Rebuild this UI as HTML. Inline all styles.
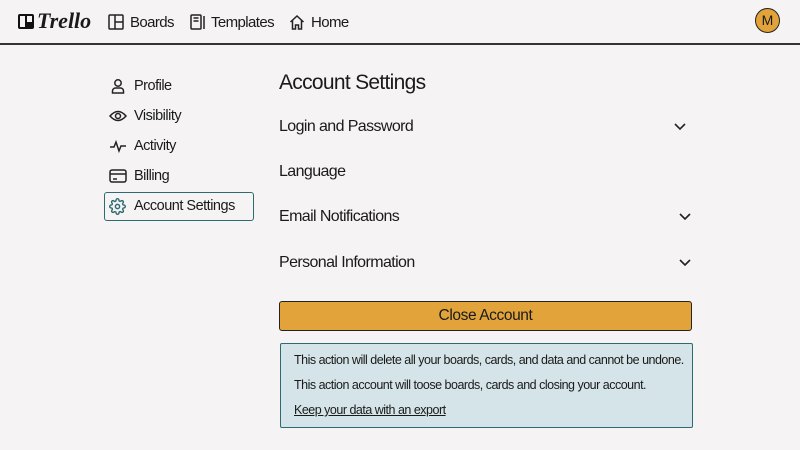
<!DOCTYPE html>
<html><head><meta charset="utf-8"><style>
body{margin:0;width:800px;height:450px;background:#f5f3f3;font-family:"Liberation Sans",sans-serif;color:#1a1a1a;position:relative;overflow:hidden}
.a{position:absolute;white-space:nowrap}
.hdr{font-size:15px;letter-spacing:-0.6px}
.side{font-size:14.5px;left:134px;letter-spacing:-0.5px}
.row{font-size:16px;left:279px;letter-spacing:-0.6px}
.inf{left:294px;font-size:12.5px;letter-spacing:-0.5px}
svg{position:absolute}
</style></head><body>
<div class="a" style="left:0;top:43px;width:800px;height:2px;background:#333"></div>
<svg style="left:17px;top:13px" width="18" height="17" viewBox="0 0 18 17"><rect x="1" y="1" width="16" height="15" rx="2" fill="#111"/><rect x="3" y="3" width="5" height="11" fill="#f5f3f3"/><rect x="10" y="3" width="5" height="6" fill="#f5f3f3"/></svg>
<div class="a" style="left:37px;top:8px;font-size:22px;font-style:italic;font-weight:bold;font-family:'Liberation Serif',serif">Trello</div>
<svg style="left:108px;top:14px" width="16" height="16" viewBox="0 0 16 16" fill="none" stroke="#222" stroke-width="1.5"><rect x="1" y="1" width="14" height="14" rx="1"/><path d="M7 1v14M7 8h8"/></svg>
<div class="a hdr" style="left:130px;top:14px">Boards</div>
<svg style="left:190px;top:14px" width="16" height="16" viewBox="0 0 16 16" fill="none" stroke="#222" stroke-width="1.5"><rect x="1" y="1" width="10" height="14" rx="1"/><path d="M3.5 4h5M3.5 7h5M14 2v13"/></svg>
<div class="a hdr" style="left:211px;top:14px">Templates</div>
<svg style="left:289px;top:14px" width="16" height="16" viewBox="0 0 16 16" fill="none" stroke="#222" stroke-width="1.5"><path d="M1.5 8L8 2l6.5 6M3.5 6.5V15h3v-4h3v4h3V6.5"/></svg>
<div class="a hdr" style="left:311px;top:14px">Home</div>
<div class="a" style="left:755px;top:8px;width:25px;height:25px;border-radius:50%;background:#e2a43a;border:1.5px solid #222;box-sizing:border-box;font-size:14px;text-align:center;line-height:23px">M</div>

<svg style="left:110px;top:78px" width="16" height="16" viewBox="0 0 16 16" fill="none" stroke="#222" stroke-width="1.5"><circle cx="8" cy="5" r="3.2"/><path d="M2.5 15v-2a3 3 0 013-3h5a3 3 0 013 3v2z"/></svg>
<div class="a side" style="top:78px">Profile</div>
<svg style="left:109px;top:108px" width="18" height="16" viewBox="0 0 18 16" fill="none" stroke="#222" stroke-width="1.5"><path d="M1 8q8-9 16 0q-8 9-16 0z"/><circle cx="9" cy="8" r="2.5"/></svg>
<div class="a side" style="top:108px">Visibility</div>
<svg style="left:109px;top:138px" width="18" height="16" viewBox="0 0 18 16" fill="none" stroke="#222" stroke-width="1.5"><path d="M1 9h4l2-5 3 9 2-5h5"/></svg>
<div class="a side" style="top:138px">Activity</div>
<svg style="left:109px;top:168px" width="18" height="16" viewBox="0 0 18 16" fill="none" stroke="#222" stroke-width="1.5"><rect x="1" y="2" width="16" height="12" rx="2"/><path d="M1 6h16M4 11h4"/></svg>
<div class="a side" style="top:168px">Billing</div>
<div class="a" style="left:104px;top:192px;width:150px;height:29px;border:1.5px solid #2d6b72;border-radius:3px;box-sizing:border-box"></div>
<svg style="left:109px;top:198px" width="17" height="17" viewBox="0 0 24 24" fill="none" stroke="#2d6b72" stroke-width="2"><circle cx="12" cy="12" r="3"/><path d="M19.4 15a1.65 1.65 0 00.33 1.820l.06.06a2 2 0 11-2.83 2.83l-.06-.06a1.65 1.65 0 00-1.82-.33 1.650 1.65 0 00-1 1.51V21a2 2 0 11-4 0v-.09A1.65 1.65 0 009 19.4a1.65 1.65 0 00-1.82.33l-.06.06a2 2 0 11-2.83-2.830l.06-.06A1.65 1.65 0 004.68 15a1.65 1.65 0 00-1.51-1H3a2 2 0 110-4h.09A1.65 1.65 0 004.6 9a1.65 1.65 0 00-.33-1.82l-.06-.06a2 2 0 112.83-2.83l.06.06A1.65 1.65 0 009 4.68a1.65 1.65 0 001-1.51V3a2 2 0 114 0v.09a1.65 1.65 0 001 1.51 1.65 1.65 0 001.82-.33l.06-.06a2 2 0 112.83 2.83l-.06.06A1.65 1.65 0 0019.4 9a1.65 1.65 0 001.51 1H21a2 2 0 110 4h-.09a1.65 1.65 0 00-1.51 1z"/></svg>
<div class="a side" style="top:198px">Account Settings</div>

<div class="a" style="left:279px;top:71px;font-size:21px;letter-spacing:-0.7px">Account Settings</div>
<div class="a row" style="top:118px">Login and Password</div>
<div class="a row" style="top:163px">Language</div>
<div class="a row" style="top:208px">Email Notifications</div>
<div class="a row" style="top:254px">Personal Information</div>
<svg style="left:674px;top:123px" width="12" height="8" viewBox="0 0 12 8" fill="none" stroke="#222" stroke-width="1.6"><path d="M1 1l5 5 5-5"/></svg>
<svg style="left:679px;top:213px" width="12" height="8" viewBox="0 0 12 8" fill="none" stroke="#222" stroke-width="1.6"><path d="M1 1l5 5 5-5"/></svg>
<svg style="left:679px;top:259px" width="12" height="8" viewBox="0 0 12 8" fill="none" stroke="#222" stroke-width="1.6"><path d="M1 1l5 5 5-5"/></svg>

<div class="a" style="left:279px;top:301px;width:413px;height:30px;background:#e2a43a;border:1.5px solid #222;border-radius:3px;box-sizing:border-box;text-align:center;line-height:28px;font-size:15.5px;letter-spacing:-0.4px">Close Account</div>
<div class="a" style="left:280px;top:343px;width:413px;height:85px;background:#d5e4e8;border:1.5px solid #2d6b72;border-radius:2px;box-sizing:border-box"></div>
<div class="a inf" style="top:353px">This action will delete all your boards, cards, and data and cannot be undone.</div>
<div class="a inf" style="top:378px">This action account will toose boards, cards and closing your account.</div>
<div class="a inf" style="top:403px;text-decoration:underline">Keep your data with an export</div>
</body></html>
